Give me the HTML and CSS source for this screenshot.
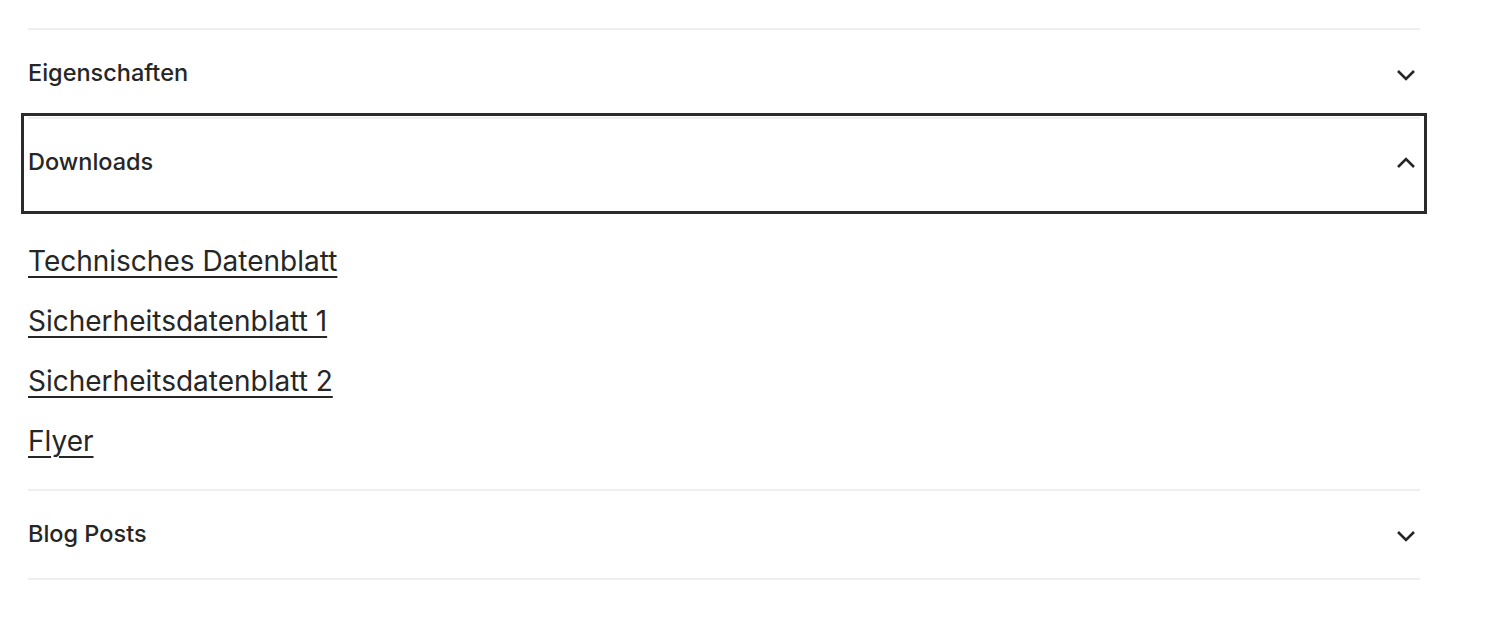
FILE: index.html
```html
<!DOCTYPE html>
<html lang="de">
  <head>
    <meta charset="UTF-8" />
    <meta name="viewport" content="width=device-width, initial-scale=1.0" />
    <title>Produktdetails</title>
    <link rel="stylesheet" href="styles.css">
  </head>
  <body>
    <div class="accordion">
      <div class="item">
        <button class="item-head">
          <span>Eigenschaften</span>
          <svg class="chevron" viewBox="0 0 24 24"><path d="M4 9l8 8 8-8" /></svg>
        </button>
      </div>

      <div class="item open">
        <button class="item-head focused">
          <span>Downloads</span>
          <svg class="chevron" viewBox="0 0 24 24"><path d="M4 16l8-8 8 8" /></svg>
        </button>
        <div class="item-body">
          <a href="#">Technisches Datenblatt</a>
          <a href="#">Sicherheitsdatenblatt 1</a>
          <a href="#">Sicherheitsdatenblatt 2</a>
          <a href="#">Flyer</a>
        </div>
      </div>

      <div class="item">
        <button class="item-head">
          <span>Blog Posts</span>
          <svg class="chevron" viewBox="0 0 24 24"><path d="M4 9l8 8 8-8" /></svg>
        </button>
      </div>
    </div>
  </body>
</html>
```

FILE: styles.css
```css
body {
  font-family: Inter, "Noto Sans", sans-serif;
  color: #262626;
  background: #fff;
  margin: 0;
  padding: 0;
}
.accordion {
  width: 1392px;
  margin: 28px 0 0 28px;
}
.item {
  border-top: 2px solid #efefef;
}
.item:last-child {
  border-bottom: 2px solid #efefef;
}
.item-head {
  position: relative;
  display: flex;
  align-items: center;
  justify-content: space-between;
  width: 100%;
  height: 87px;
  padding: 0 0 2px;
  border: none;
  background: none;
  font-family: inherit;
  font-size: 23.5px;
  font-weight: 500;
  color: #262626;
  cursor: pointer;
}
/* Fokusrahmen um den offenen Kopf */
.item-head.focused::after {
  content: "";
  position: absolute;
  top: -6px;
  bottom: -8px;
  left: -7px;
  right: -7px;
  border: 3px solid #2b2b2b;
}
.chevron {
  width: 24px;
  height: 24px;
  margin: 3px 2px 0 0;
  fill: none;
  stroke: #262626;
  stroke-width: 2.6;
}
.item-body {
  display: flex;
  flex-direction: column;
  align-items: flex-start;
  gap: 24px;
  padding: 37px 0 30px;
}
.item-body a {
  font-size: 28px;
  line-height: 36px;
  color: #262626;
  text-decoration: underline;
  text-decoration-thickness: 2px;
  text-underline-offset: 5px;
}
```
